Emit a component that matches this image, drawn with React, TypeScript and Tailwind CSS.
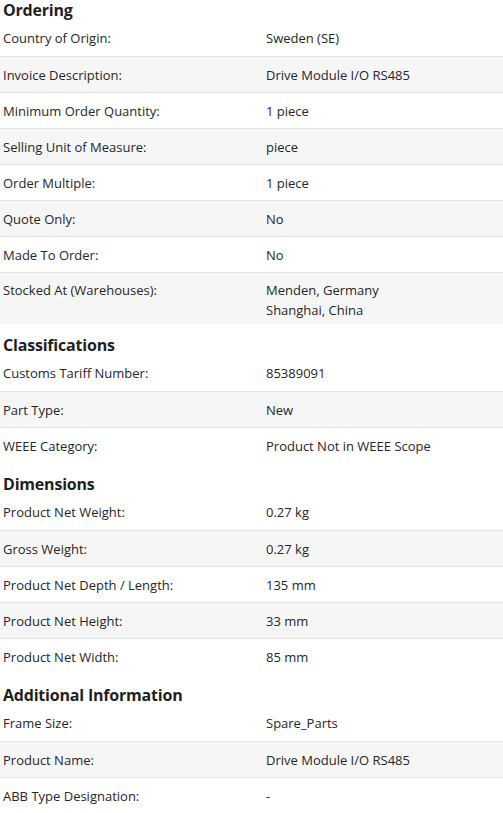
type Row = { label: string; value: string[] }

const sections: { title: string; rows: Row[] }[] = [
  {
    title: "Ordering",
    rows: [
      { label: "Country of Origin:", value: ["Sweden (SE)"] },
      { label: "Invoice Description:", value: ["Drive Module I/O RS485"] },
      { label: "Minimum Order Quantity:", value: ["1 piece"] },
      { label: "Selling Unit of Measure:", value: ["piece"] },
      { label: "Order Multiple:", value: ["1 piece"] },
      { label: "Quote Only:", value: ["No"] },
      { label: "Made To Order:", value: ["No"] },
      { label: "Stocked At (Warehouses):", value: ["Menden, Germany", "Shanghai, China"] },
    ],
  },
  {
    title: "Classifications",
    rows: [
      { label: "Customs Tariff Number:", value: ["85389091"] },
      { label: "Part Type:", value: ["New"] },
      { label: "WEEE Category:", value: ["Product Not in WEEE Scope"] },
    ],
  },
  {
    title: "Dimensions",
    rows: [
      { label: "Product Net Weight:", value: ["0.27 kg"] },
      { label: "Gross Weight:", value: ["0.27 kg"] },
      { label: "Product Net Depth / Length:", value: ["135 mm"] },
      { label: "Product Net Height:", value: ["33 mm"] },
      { label: "Product Net Width:", value: ["85 mm"] },
    ],
  },
  {
    title: "Additional Information",
    rows: [
      { label: "Frame Size:", value: ["Spare_Parts"] },
      { label: "Product Name:", value: ["Drive Module I/O RS485"] },
      { label: "ABB Type Designation:", value: ["-"] },
    ],
  },
]

export default function App() {
  return (
    <div className="w-[503px] h-[813px] overflow-hidden bg-white text-[#262626] font-['Open_Sans',sans-serif]">
      <div className="-mt-[11px]">
        {sections.map((section) => (
          <div key={section.title}>
            {/* section heading */}
            <h2 className="pt-[10px] h-[31px] text-[16px] leading-[22px] font-bold tracking-[-0.2px] pl-[3px] text-[#1f1f1f]">
              {section.title}
            </h2>
            {section.rows.map((row, i) => {
              const multi = row.value.length > 1
              return (
                <div
                  key={row.label}
                  className={`grid grid-cols-[266px_1fr] text-[13px] leading-[20px] ${
                    i > 0 ? "border-t border-[#e4e4e4]" : ""
                  } ${i % 2 === 1 ? "bg-[#f6f6f6]" : ""} ${multi ? "pt-[7px] pb-[4px]" : "h-[36px] items-center"}`}
                >
                  <div className="pl-[3px]">{row.label}</div>
                  <div>
                    {row.value.map((v) => (
                      <div key={v}>{v}</div>
                    ))}
                  </div>
                </div>
              )
            })}
          </div>
        ))}
      </div>
    </div>
  )
}
